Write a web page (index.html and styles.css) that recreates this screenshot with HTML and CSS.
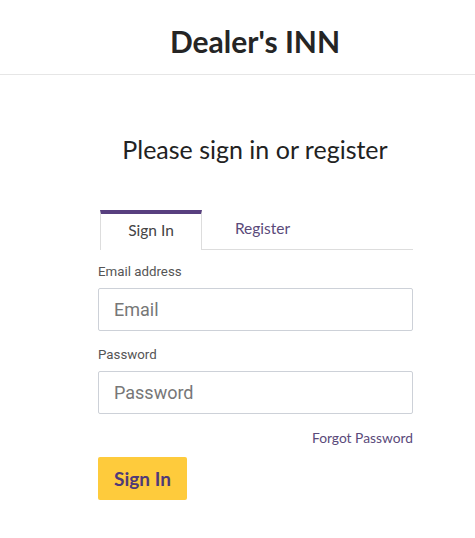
FILE: index.html
```html
<!DOCTYPE html>
<html>
<head>
<meta charset="utf-8">
<link rel="stylesheet" href="styles.css">
</head>
<body>
<header class="topbar"><h1 class="brand">Dealer's INN</h1></header>
<main class="main">
  <h2 class="heading">Please sign in or register</h2>
  <div class="card">
    <div class="tabs">
      <div class="tab active">Sign In</div>
      <div class="tab">Register</div>
      <div class="tab-fill"></div>
    </div>
    <form class="form">
      <label class="label">Email address</label>
      <input class="input" type="text" placeholder="Email">
      <label class="label">Password</label>
      <input class="input" type="password" placeholder="Password">
      <div class="forgot-row"><a class="forgot">Forgot Password</a></div>
      <button class="btn" type="button">Sign In</button>
    </form>
  </div>
</main>
</body>
</html>
```
FILE: styles.css
```css
* { box-sizing: border-box; }
html, body { margin: 0; padding: 0; background: #fff; }
body { font-family: Lato, "Open Sans", sans-serif; color: #222; }
.topbar {
  height: 75px;
  border-bottom: 1px solid #e6e6e6;
  display: flex;
  align-items: center;
  justify-content: center;
}
.brand {
  margin: 0;
  font-size: 30px;
  font-weight: 700;
  color: #252525;
  padding-left: 35px;
  padding-top: 8px;
}
.main {
  display: flex;
  flex-direction: column;
  align-items: center;
}
.heading {
  margin: 58px 0 0 0;
  font-weight: 400;
  font-size: 25px;
  color: #222;
  padding-left: 35px;
  line-height: 32px;
}
.card {
  width: 315px;
  margin-left: 36px;
  margin-top: 45px;
}
.tabs {
  display: flex;
  height: 40px;
  margin-left: 2px;
}
.tab {
  width: 102px;
  height: 40px;
  display: flex;
  align-items: center;
  justify-content: center;
  font-size: 15.5px;
  color: #5a4a7a;
  border-bottom: 1px solid #ddd;
  padding-bottom: 4px;
}
.tab.active {
  color: #444;
  border: 1px solid #ddd;
  border-top: 4px solid #583f7f;
  border-bottom: none;
  padding-bottom: 5px;
  padding-top: 0;
}
.tab + .tab { width: 121px; }
.tab-fill { flex: 1; border-bottom: 1px solid #ddd; }
.form {
  display: flex;
  flex-direction: column;
  padding-top: 14px;
}
.label {
  font-family: Roboto, sans-serif;
  font-size: 13.3px;
  color: #555;
  line-height: 15px;
  margin-bottom: 9px;
}
.input {
  height: 43px;
  border: 1px solid #cdd1d8;
  border-radius: 2px;
  padding: 0 15px;
  font-family: Roboto, sans-serif;
  font-size: 18px;
  margin-bottom: 16px;
  color: #333;
}
.input::placeholder { color: #777; }
.forgot-row {
  display: flex;
  justify-content: flex-end;
  margin-top: 0;
}
.forgot {
  font-size: 13.8px;
  color: #5a4a7a;
  line-height: 15px;
}
.btn {
  margin-top: 12px;
  width: 89px;
  height: 43px;
  background: #fecb3c;
  border: none;
  border-radius: 2px;
  font-family: Lato, sans-serif;
  font-weight: 700;
  font-size: 19px;
  color: #4f3a78;
  cursor: pointer;
}
```
